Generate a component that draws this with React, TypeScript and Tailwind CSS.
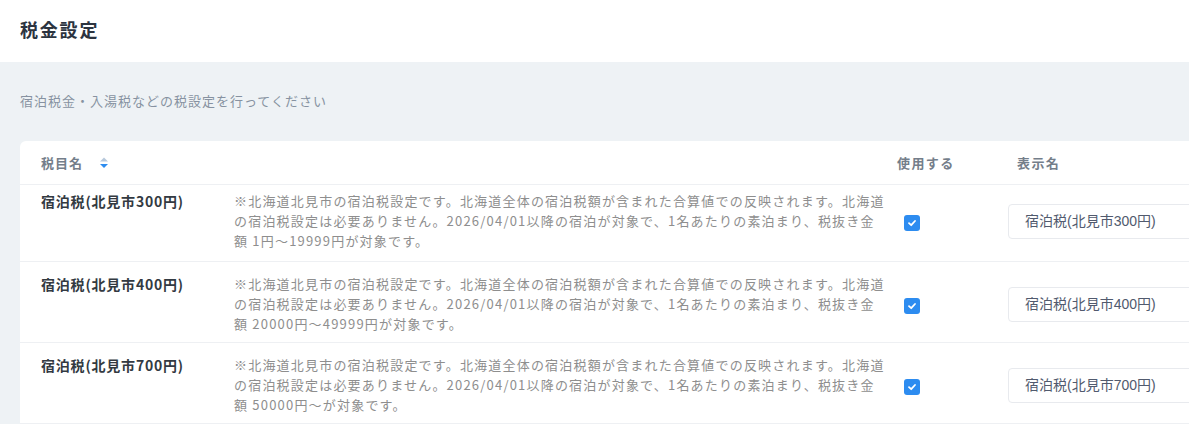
import React from "react";

const taxes = [
  {
    name: "宿泊税(北見市300円)",
    lines: [
      "※北海道北見市の宿泊税設定です。北海道全体の宿泊税額が含まれた合算値での反映されます。北海道",
      "の宿泊税設定は必要ありません。2026/04/01以降の宿泊が対象で、1名あたりの素泊まり、税抜き金",
      "額 1円～19999円が対象です。",
    ],
    first: true,
  },
  {
    name: "宿泊税(北見市400円)",
    lines: [
      "※北海道北見市の宿泊税設定です。北海道全体の宿泊税額が含まれた合算値での反映されます。北海道",
      "の宿泊税設定は必要ありません。2026/04/01以降の宿泊が対象で、1名あたりの素泊まり、税抜き金",
      "額 20000円～49999円が対象です。",
    ],
    first: false,
  },
  {
    name: "宿泊税(北見市700円)",
    lines: [
      "※北海道北見市の宿泊税設定です。北海道全体の宿泊税額が含まれた合算値での反映されます。北海道",
      "の宿泊税設定は必要ありません。2026/04/01以降の宿泊が対象で、1名あたりの素泊まり、税抜き金",
      "額 50000円～が対象です。",
    ],
    first: false,
  },
];

const SortIcon = () => (
  <svg width="8" height="12" viewBox="0 0 8 12" className="ml-[17px]">
    <polygon points="4,0.5 8,4.5 0,4.5" fill="#b7c8db" />
    <polygon points="0,7 8,7 4,11" fill="#2d8cf0" />
  </svg>
);

const Checkbox = () => (
  <span className="flex h-4 w-4 items-center justify-center rounded-[3px] bg-[#2d8cf0]">
    <svg width="10" height="10" viewBox="0 0 10 10">
      <path d="M2 5.2 L4.2 7.2 L8 3" fill="none" stroke="white" strokeWidth="1.8" strokeLinecap="round" strokeLinejoin="round" />
    </svg>
  </span>
);

export default function App() {
  return (
    <div className="min-h-screen overflow-hidden bg-[#eef2f5] font-['Noto_Sans_CJK_JP',sans-serif]">
      <div className="flex h-[62px] items-center bg-white px-5">
        <h1 className="-mt-1 text-[18px] font-bold tracking-[1.8px] text-[#2c3440]">税金設定</h1>
      </div>

      <div className="pl-5 pt-[31px]">
        <p className="text-[13px] leading-4 tracking-[1px] text-[#8792a1]">
          宿泊税金・入湯税などの税設定を行ってください
        </p>

        <div className="mt-8 w-[1250px] rounded-tl-md bg-white">
          <div className="grid h-[44px] grid-cols-[214px_663px_111px_1fr] items-center border-b border-[#eef0f3] text-[13px] font-bold tracking-[1.4px] text-[#747e8a]">
            <div className="flex items-center pl-[21px] tracking-[1px]">
              税目名
              <SortIcon />
            </div>
            <div />
            <div>使用する</div>
            <div className="pl-[9px]">表示名</div>
          </div>

          {taxes.map((tax) => (
            <div
              key={tax.name}
              className={`grid grid-cols-[214px_663px_111px_1fr] items-center border-b border-[#eef0f3] ${
                tax.first ? "pt-[6px] pb-[10px]" : "pt-[12px] pb-[8px]"
              }`}
            >
              <div className="self-start pl-[21px] text-[14px] font-bold leading-5 tracking-[0.8px] text-[#333a42]">
                {tax.name}
              </div>
              <div className="text-[13px] leading-5 tracking-[1.2px] text-[#8e8e8e]">
                {tax.lines.map((line, j) => (
                  <div key={j} className="whitespace-nowrap">
                    {line}
                  </div>
                ))}
              </div>
              <div className="flex pl-[7px] pt-[3px]">
                <Checkbox />
              </div>
              <div>
                <div className="flex h-[35px] w-[260px] items-center rounded border border-[#e8eaee] pl-4 font-['Liberation_Sans','Noto_Sans_CJK_JP',sans-serif] text-[14px] text-[#515a6e]">
                  {tax.name}
                </div>
              </div>
            </div>
          ))}
        </div>
      </div>
    </div>
  );
}
